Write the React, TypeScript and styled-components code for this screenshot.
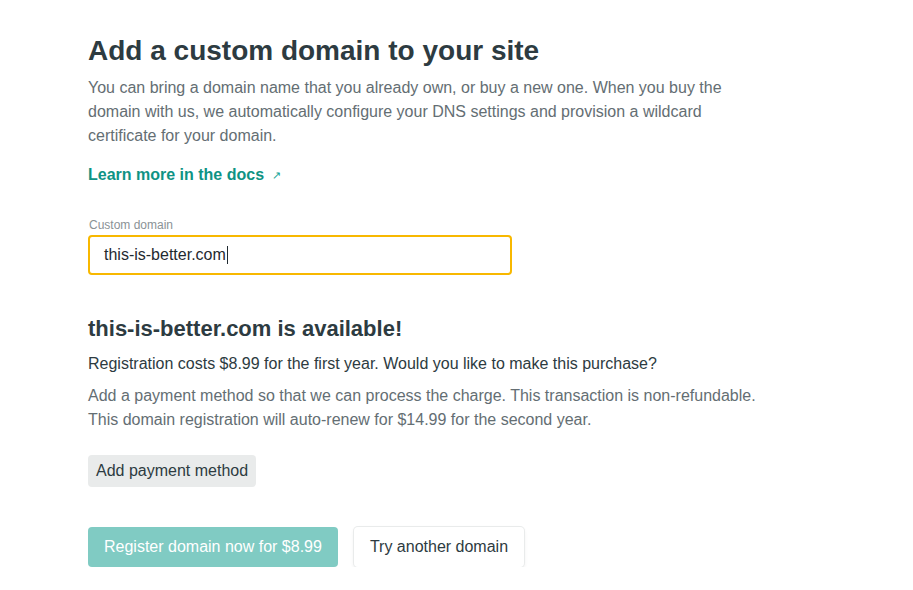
import React from "react";
import styled, { createGlobalStyle } from "styled-components";

const Global = createGlobalStyle`
  html, body { margin: 0; padding: 0; background: #ffffff; }
  body { font-family: "Liberation Sans", Arial, sans-serif; color: #2e3a40; }
  * { box-sizing: border-box; }
`;

const Page = styled.main`
  padding: 33px 88px 0 88px;
  display: flex;
  flex-direction: column;
  align-items: flex-start;
`;

const Title = styled.h1`
  margin: 0;
  font-size: 28px;
  line-height: 36px;
  font-weight: 700;
  color: #2d3b41;
`;

const Text = styled.p<{ $muted?: boolean; $top?: number }>`
  margin: ${(p) => p.$top ?? 0}px 0 0 0;
  max-width: 680px;
  font-size: 16px;
  line-height: 24px;
  color: ${(p) => (p.$muted ? "#646e73" : "#2d3b41")};
`;

const DocLink = styled.a`
  margin-top: 15px;
  font-size: 16px;
  line-height: 24px;
  font-weight: 700;
  color: #0e9384;
  text-decoration: none;
  display: inline-flex;
  align-items: center;
  gap: 8px;
`;

const Arrow = styled.span`
  font-size: 11px;
  font-weight: 400;
  color: #16a394;
`;

const Field = styled.label`
  margin-top: 31px;
  display: flex;
  flex-direction: column;
  gap: 3px;
`;

const FieldLabel = styled.span`
  font-size: 12px;
  line-height: 14px;
  color: #8a9296;
  padding-left: 1px;
`;

const Input = styled.div`
  width: 424px;
  height: 40px;
  border: 2px solid #f8b800;
  border-radius: 4px;
  padding: 0 14px;
  display: flex;
  align-items: center;
  font-size: 16px;
  color: #1f2a30;
`;

const Caret = styled.span`
  display: inline-block;
  width: 1px;
  height: 18px;
  background: #1f2a30;
  margin-left: 1px;
`;

const Subtitle = styled.h2`
  margin: 40px 0 0 0;
  font-size: 22px;
  line-height: 28px;
  font-weight: 700;
  color: #2d3b41;
`;

const Button = styled.button<{ $variant: "soft" | "primary" | "outline" }>`
  font-family: "Liberation Sans", Arial, sans-serif;
  font-size: 16px;
  border-radius: 4px;
  cursor: pointer;
  ${(p) =>
    p.$variant === "soft"
      ? `height: 32px; padding: 0 8px; background: #e9ebeb; color: #2d3b41; border: none;`
      : p.$variant === "primary"
      ? `height: 40px; padding: 0 16px; background: #80cbc3; color: #ffffff; border: none;`
      : `height: 40px; padding: 0 16px; background: #ffffff; color: #2d3b41; border: none; box-shadow: 0 0 0 1px #e9ebeb, 0 2px 4px rgba(0,0,0,0.08);`}
`;

const SoftRow = styled.div`
  margin-top: 23px;
`;

const Actions = styled.div`
  margin-top: 40px;
  display: flex;
  gap: 16px;
`;

export default function App() {
  return (
    <>
      <Global />
      <Page>
        <Title>Add a custom domain to your site</Title>
        <Text $muted $top={7}>
          You can bring a domain name that you already own, or buy a new one. When you buy the
          domain with us, we automatically configure your DNS settings and provision a wildcard
          certificate for your domain.
        </Text>
        <DocLink href="#">
          Learn more in the docs <Arrow>↗</Arrow>
        </DocLink>
        <Field>
          <FieldLabel>Custom domain</FieldLabel>
          <Input>
            this-is-better.com
            <Caret />
          </Input>
        </Field>
        <Subtitle>this-is-better.com is available!</Subtitle>
        <Text $top={9}>
          Registration costs $8.99 for the first year. Would you like to make this purchase?
        </Text>
        <Text $muted $top={8}>
          Add a payment method so that we can process the charge. This transaction is non-refundable.
          This domain registration will auto-renew for $14.99 for the second year.
        </Text>
        <SoftRow>
          <Button $variant="soft">Add payment method</Button>
        </SoftRow>
        <Actions>
          <Button $variant="primary">Register domain now for $8.99</Button>
          <Button $variant="outline">Try another domain</Button>
        </Actions>
      </Page>
    </>
  );
}
